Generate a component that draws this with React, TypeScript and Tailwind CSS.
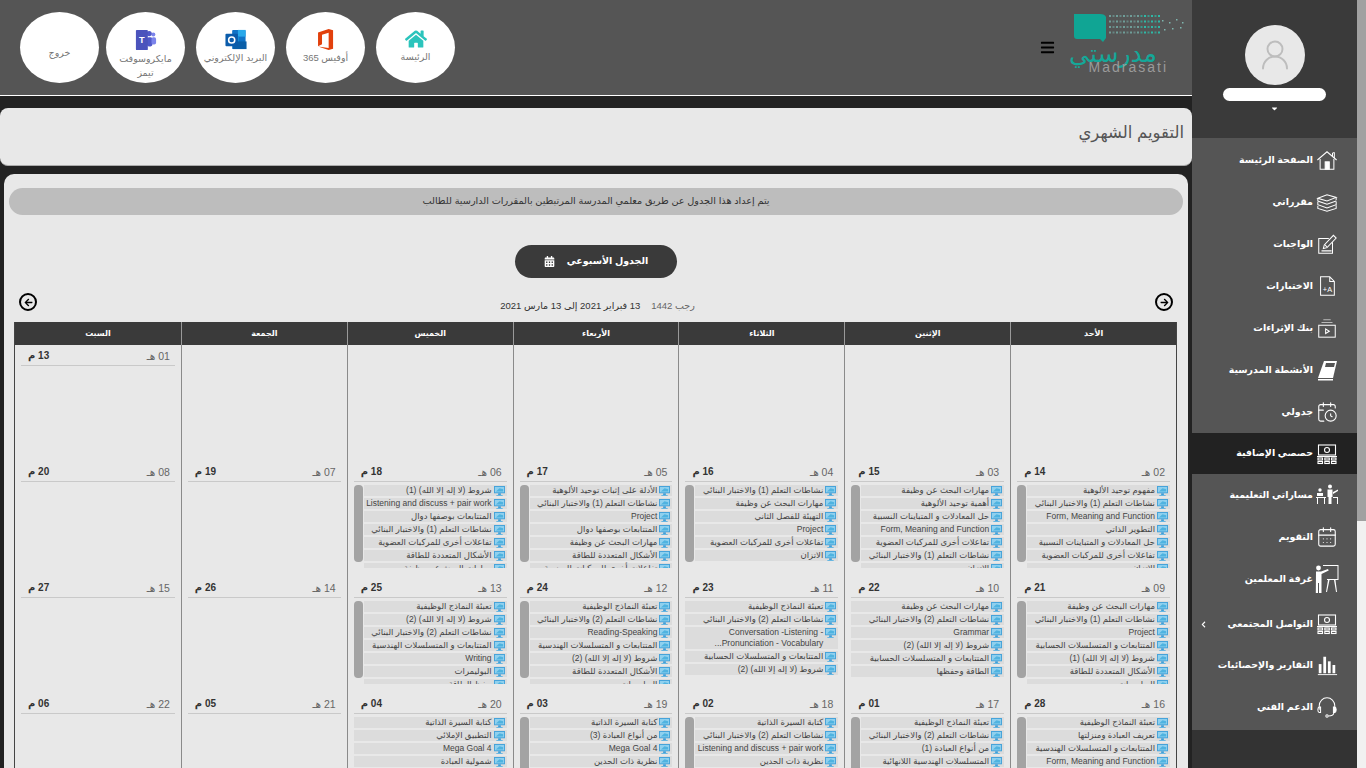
import React from "react";
import { FaHome, FaBars, FaCalendarAlt, FaCaretDown, FaChevronLeft, FaArrowLeft, FaArrowRight } from "react-icons/fa";
import { CalendarClock, CalendarDays, UserRound } from "lucide-react";

const L = {
  s1: "نشاطات التعلم (1) والاختبار البنائي",
  s2: "نشاطات التعلم (2) والاختبار البنائي",
  job: "مهارات البحث عن وظيفة",
  form: "Form, Meaning and Function",
  ineq: "حل المعادلات و المتباينات النسبية",
  org: "تفاعلات أخرى للمركبات العضوية",
  eq: "الاتزان",
  fn: "المتتابعات بوصفها دوال",
  en: "الأشكال المتعددة للطاقة",
  sh1: "شروط (لا إله إلا الله) (1)",
  sh2: "شروط (لا إله إلا الله) (2)",
  ld: "Listening and discuss + pair work",
  ar: "المتتابعات و المتسلسلات الحسابية",
  geo: "المتتابعات و المتسلسلات الهندسية",
  poly: "البوليمرات",
  fill: "تعبئة النماذج الوظيفية",
  cv: "كتابة السيرة الذاتية",
  bin: "نظرية ذات الحدين",
  mg: "Mega Goal 4",
};

type Cell = { h?: string; m?: string; items?: string[]; bar?: boolean };

const rows: Cell[][] = [
  [{}, {}, {}, {}, {}, {}, { h: "01", m: "13" }],
  [
    { h: "02", m: "14", bar: true, items: ["مفهوم توحيد الألوهية", L.s1, L.form, "التطوير الذاتي", L.ineq, L.org, L.eq] },
    { h: "03", m: "15", bar: true, items: [L.job, "أهمية توحيد الألوهية", L.ineq, L.form, L.org, L.s1, L.eq] },
    { h: "04", m: "16", bar: true, items: [L.s1, L.job, "التهيئة للفصل الثاني", "Project", L.org, L.eq] },
    { h: "05", m: "17", bar: true, items: ["الأدلة على إثبات توحيد الألوهية", L.s1, "Project", L.fn, L.job, L.en, L.org] },
    { h: "06", m: "18", bar: true, items: [L.sh1, L.ld, L.fn, L.s1, L.org, L.en, L.job] },
    { h: "07", m: "19" },
    { h: "08", m: "20" },
  ],
  [
    { h: "09", m: "21", bar: true, items: [L.job, L.s1, "Project", L.ar, L.sh1, L.en, L.poly] },
    { h: "10", m: "22", items: [L.job, L.s2, "Grammar", L.sh2, L.ar, "الطاقة وحفظها"] },
    { h: "11", m: "23", items: [L.fill, L.s2, "Conversation -Listening - Pronunciation - Vocabulary...", L.ar, L.sh2] },
    { h: "12", m: "24", bar: true, items: [L.fill, L.s2, "Reading-Speaking", L.geo, L.sh2, L.en, L.poly] },
    { h: "13", m: "25", bar: true, items: [L.fill, L.sh2, L.s2, L.geo, "Writing", L.poly, "حفظ الطاقة"] },
    { h: "14", m: "26" },
    { h: "15", m: "27" },
  ],
  [
    { h: "16", m: "28", bar: true, items: [L.fill, "تعريف العبادة ومنزلتها", L.geo, L.form] },
    { h: "17", m: "01", bar: true, items: [L.fill, L.s2, "من أنواع العبادة (1)", "المتسلسلات الهندسية اللانهائية"] },
    { h: "18", m: "02", bar: true, items: [L.cv, L.s2, L.ld, L.bin] },
    { h: "19", m: "03", bar: true, items: [L.cv, "من أنواع العبادة (3)", L.mg, L.bin] },
    { h: "20", m: "04", items: [L.cv, "التطبيق الإملائي", L.mg, "شمولية العبادة"] },
    { h: "21", m: "05" },
    { h: "22", m: "06" },
  ],
];

const days = ["الأحد", "الإثنين", "الثلاثاء", "الأربعاء", "الخميس", "الجمعة", "السبت"];

function Monitor() {
  return (
    <svg viewBox="0 0 12 11" className="w-[11px] h-[10px] shrink-0">
      <rect x="0" y="0" width="12" height="8" fill="#3f9fd8" />
      <rect x="1" y="1" width="10" height="6" fill="#8fd0ee" />
      <path d="M2 6 L6 2.5 L10 3.5 L10 6 Z" fill="#4fb3e0" />
      <rect x="4.5" y="8" width="3" height="2" fill="#3f9fd8" />
      <rect x="2.5" y="10" width="7" height="1" fill="#5db3e2" />
    </svg>
  );
}

function DayCell({ cell, last }: { cell: Cell; last: boolean }) {
  return (
    <div className={`h-[116px] pt-[5px] px-[6px] flex flex-col ${last ? "" : "border-l border-[#8a8a8a]"}`}>
      {cell.h && (
        <>
          <div className="h-[16px] pr-[5px] pl-[7px] flex items-start justify-between text-[10.5px] leading-[12px] border-b border-[#c9c9c9]">
            <span className="text-[#666]">{cell.h} هـ</span>
            <span className="font-bold text-[#333] text-[10px]">{cell.m} م</span>
          </div>
          <div className="h-[83px] mt-[3px] overflow-hidden flex flex-row gap-[1px]">
            {cell.items && (
              <>
                <div className="grow flex flex-col gap-[2px] min-w-0">
                  {cell.items.map((t, i) => (
                    <div key={i} className="flex items-start gap-[2px] bg-[#dcdcdc] min-h-[11px] px-[2px] text-[8.5px] leading-[11px] text-[#444]">
                      <span className="pt-[1px]"><Monitor /></span>
                      <span className="grow min-w-0">{t}</span>
                    </div>
                  ))}
                </div>
                {cell.bar && <div className="w-[9px] h-[77px] rounded-[4px] bg-[#a3a3a3] shrink-0" />}
              </>
            )}
          </div>
        </>
      )}
    </div>
  );
}

function TopBtn({ icon, label, cls = "" }: { icon?: React.ReactNode; label: React.ReactNode; cls?: string }) {
  return (
    <div className={`w-[79px] h-[71px] rounded-[50%] bg-white flex flex-col items-center text-[9.5px] leading-[14px] text-[#777] text-center shrink-0 ${icon ? "justify-start pt-[16px]" : "justify-center pt-[10px]"} ${cls}`}>
      {icon}
      <div>{label}</div>
    </div>
  );
}

const OutlookIcon = () => (
  <svg viewBox="0 0 24 24" className="w-[24px] h-[23px]">
    <rect x="8" y="2" width="14" height="20" rx="1" fill="#0f72c6" />
    <rect x="14" y="2" width="8" height="7" fill="#28a8ea" />
    <rect x="8" y="9" width="7" height="6" fill="#0f8fd8" />
    <path d="M9 14 L23 14 L23 22 L9 22 Z" fill="#0a5fa8" />
    <rect x="1" y="6" width="13" height="13" rx="1" fill="#0b5cab" />
    <circle cx="7.5" cy="12.5" r="3.2" fill="none" stroke="#fff" strokeWidth="1.6" />
  </svg>
);
const OfficeIcon = () => (
  <svg viewBox="0 0 20 26" className="w-[18px] h-[23px]">
    <path d="M1 5 L13 1 L18 2.5 L18 23.5 L13 25 L1 21 L13 22.5 L13 5.5 L5.5 7.5 L5.5 18.5 L1 20.5 Z" fill="#e2400c" />
  </svg>
);
const TeamsIcon = () => (
  <svg viewBox="0 0 24 24" className="w-[22px] h-[24px]">
    <circle cx="20" cy="6" r="2.2" fill="#7b83eb" />
    <circle cx="15.5" cy="5" r="2.8" fill="#5059c9" />
    <rect x="13" y="9" width="6" height="10" rx="2" fill="#5059c9" />
    <rect x="18" y="9" width="5" height="8" rx="2" fill="#7b83eb" />
    <rect x="1" y="1" width="13" height="22" rx="1" fill="#4b53bc" />
    <text x="7.5" y="15.5" fontSize="10" fontWeight="700" fill="#fff" textAnchor="middle" fontFamily="Liberation Sans">T</text>
  </svg>
);

function CircleArrow({ dir }: { dir: "l" | "r" }) {
  return (
    <div className="w-[18px] h-[18px] rounded-full border-[2.5px] border-black flex items-center justify-center text-black">
      {dir === "l" ? <FaArrowLeft size={9} /> : <FaArrowRight size={9} />}
    </div>
  );
}

const ic = { size: 22, strokeWidth: 1.2, color: "#fff" };
const stroke = { fill: "none", stroke: "#fff", strokeWidth: 1.1 };
const BoardIcon = () => (
  <svg viewBox="0 0 24 24" width="24" height="24" {...stroke}>
    <rect x="3.5" y="3" width="17" height="10" />
    <circle cx="12" cy="8" r="2.5" />
    <path d="M2 14.5 H22" />
    <rect x="3" y="16" width="4.5" height="2" /><rect x="9.8" y="16" width="4.5" height="2" /><rect x="16.5" y="16" width="4.5" height="2" />
    <rect x="3" y="19.5" width="4.5" height="2" /><rect x="9.8" y="19.5" width="4.5" height="2" /><rect x="16.5" y="19.5" width="4.5" height="2" />
  </svg>
);
const side: { t: string; i: React.ReactNode; active?: boolean; chev?: boolean; h: number; wide?: boolean }[] = [
  {
    t: "الصفحة الرئيسة",
    i: (
      <svg viewBox="0 0 24 24" width="22" height="22" {...stroke}>
        <path d="M1.5 12 L12 3 L22.5 12" />
        <path d="M18 4 V8 M18.5 4 H20 V10" />
        <path d="M4.5 11 V22 H19.5 V11" />
        <rect x="10" y="14" width="4.5" height="8" fill="#fff" />
      </svg>
    ),
    h: 42,
  },
  {
    t: "مقرراتي",
    i: (
      <svg viewBox="0 0 24 24" width="24" height="22" {...stroke}>
        <path d="M2 8 L12 4 L22 7 L12 11 Z" />
        <path d="M2 8 V11 L12 14.5 L22 11" />
        <path d="M22 10 V7" />
        <path d="M2 12 V15 L12 18.5 L22 15 V11.5" />
        <path d="M2 16 V19 L12 22 L22 19 V15.5" />
      </svg>
    ),
    h: 42,
  },
  {
    t: "الواجبات",
    i: (
      <svg viewBox="0 0 24 24" width="22" height="22" {...stroke}>
        <path d="M18 10 V22 H3 V6 H14" />
        <path d="M8 17 L9 13 L19 2.5 L22 5.5 L12 16 Z" />
        <path d="M10 13 L12 15.5 M6 19.5 H17" />
      </svg>
    ),
    h: 42,
  },
  {
    t: "الاختبارات",
    i: (
      <svg viewBox="0 0 24 24" width="22" height="22" {...stroke}>
        <path d="M5 2 H15 L20 7 V22 H5 Z M15 2 V7 H20" />
        <text x="12.5" y="18" fontSize="8" fill="#fff" stroke="none" textAnchor="middle" fontFamily="Liberation Sans">A+</text>
      </svg>
    ),
    h: 42,
  },
  {
    t: "بنك الإثراءات",
    i: (
      <svg viewBox="0 0 24 24" width="22" height="22" {...stroke}>
        <rect x="3" y="9" width="18" height="13" />
        <path d="M6 6 H18 M8 3 H16" stroke="#bbb" />
        <path d="M10.5 13 L14.5 15.5 L10.5 18 Z" />
      </svg>
    ),
    h: 42,
  },
  {
    t: "الأنشطة المدرسية",
    i: (
      <svg viewBox="0 0 24 24" width="24" height="24" fill="#fff">
        <path d="M9 3 H22 L18 20 H3 Z" />
        <path d="M11 5 H20 L19 9 H10 Z" fill="#555" />
        <path d="M3 21 H18 V22.5 H3 Z" />
      </svg>
    ),
    h: 42,
  },
  { t: "جدولي", i: <CalendarClock {...ic} />, h: 42 },
  { t: "حصصي الإضافية", i: <BoardIcon />, active: true, h: 41 },
  {
    t: "مساراتي التعليمية",
    i: (
      <svg viewBox="0 0 24 24" width="24" height="24" fill="#fff">
        <circle cx="15" cy="3.5" r="2" />
        <path d="M12.5 6.5 H17.5 V14 H16.5 V21 H13.5 V14 H12.5 Z" />
        <path d="M18 9 L23 6.5 V8 L18 11 Z M18 14 H23 V21 H22 V15 H18 Z" />
        <circle cx="5" cy="7" r="1.7" />
        <path d="M2 10 H8 V13 H2 Z M1 14 H11 V15 H1 Z M2 15 V21 H3 V15 Z M9 15 V21 H10 V15 Z" />
      </svg>
    ),
    h: 42,
  },
  { t: "التقويم", i: <CalendarDays {...ic} />, h: 42 },
  {
    t: "غرفة المعلمين",
    wide: true,
    i: (
      <svg viewBox="0 0 24 30" width="24" height="30" fill="#fff">
        <circle cx="3.5" cy="4" r="2.4" />
        <path d="M1 7.5 H6 L13 5 L13.7 6.4 L6.5 10 V29 H4 V19 H3 V29 H0.8 Z" />
        <path d="M8 1 H23.5 V16 H12 V15 H22.5 V2 H8 Z" />
        <path d="M13 16 H14.5 L12 28 H11 Z M19 16 H20.5 L22 28 H21 Z" />
      </svg>
    ),
    h: 46,
  },
  { t: "التواصل المجتمعي", i: <BoardIcon />, chev: true, h: 40 },
  {
    t: "التقارير والإحصائيات",
    i: (
      <svg viewBox="0 0 24 24" width="22" height="22" fill="#fff">
        <rect x="3" y="11" width="3" height="10" />
        <rect x="8" y="3" width="3" height="18" />
        <rect x="13" y="8" width="3" height="13" />
        <rect x="18" y="12" width="3" height="9" />
        <rect x="2" y="22" width="21" height="1" />
      </svg>
    ),
    h: 42,
  },
  {
    t: "الدعم الفني",
    i: (
      <svg viewBox="0 0 24 24" width="22" height="22" {...stroke}>
        <path d="M3.5 15 V11 C3.5 5.5 7.5 2 12 2 C16.5 2 20.5 5.5 20.5 11 V15" />
        <path d="M3.5 12 C1.5 12.5 1.5 17.5 3.5 18 H5 V12 Z" />
        <path d="M20.5 12 C22.5 12.5 22.5 17.5 20.5 18 H19 V12 Z" fill="#fff" />
        <path d="M19.5 18 C19.5 21 16 21.8 13.5 21.8" />
        <circle cx="12" cy="21.8" r="1.3" />
      </svg>
    ),
    h: 42,
  },
];

export default function App() {
  return (
    <div dir="rtl" className="h-screen w-full overflow-hidden flex flex-row bg-[#222] font-['Liberation_Sans','DejaVu_Sans',sans-serif]">
      {/* page scrollbar */}
      <div className="w-[9px] h-full bg-[#f1f1f1] shrink-0 order-first">
        <div className="h-[521px] bg-[#a1a1a1]" />
      </div>

      {/* sidebar */}
      <aside className="w-[165px] h-full shrink-0 flex flex-col bg-[#333]">
        <div className="h-[138px] bg-[#3a3a3a] flex flex-col items-center pt-[25px] shrink-0">
          <div className="w-[60px] h-[60px] rounded-full bg-[#e8e8e8] flex items-center justify-center">
            <UserRound size={36} strokeWidth={1.3} color="#bdbdbd" />
          </div>
          <div className="w-[103px] h-[13px] rounded-full bg-white mt-[3px]" />
          <FaCaretDown size={9} color="#fff" className="mt-[3px]" />
        </div>
        <nav className="bg-[#555] flex flex-col pt-[1px] pb-[2px]">
          {side.map((s) => (
            <div key={s.t} style={{ height: s.h }} className={`flex items-center pr-[18px] ${s.wide ? "pb-[4px]" : ""} ${s.active ? "bg-[#222]" : ""}`}>
              <div className={`${s.wide ? "w-[26px] -mr-[1px]" : "w-[25px]"} flex justify-center shrink-0`}>{s.i}</div>
              <span className={`${s.wide ? "mr-[1px]" : "mr-[1px]"} text-[9.5px] font-bold text-white whitespace-nowrap`}>{s.t}</span>
              {s.chev && <FaChevronLeft size={7} color="#fff" className="mr-auto ml-[8px]" />}
            </div>
          ))}
        </nav>
      </aside>

      {/* main */}
      <main className="grow min-w-0 flex flex-col">
        <header className="h-[96px] shrink-0 bg-[#555] border-b border-white flex items-center justify-between pr-[8px] pl-[20px]">
          <div className="flex items-center gap-[17px]">
            <div className="w-[112px] flex flex-col items-start pb-[8px]">
              <svg viewBox="0 0 112 28" className="w-[112px] h-[28px]">
                <path d="M2 0 H28 Q33 0 34 3 V24 L31 28 L28 25 H5 Q2 25 2 22 Z" fill="#10a594" />
                {[0, 1, 2, 3].map((r) =>
                  Array.from({ length: 15 }).map((_, c) => (
                    <rect key={`${r}-${c}`} x={37 + c * 3.5} y={1 + r * 5.5} width="2" height="2" fill={c < 9 ? "#6f9d98" : "#2fb8a6"} opacity={c % 2 ? 0.7 : 1} />
                  ))
                )}
                {[[90, 6], [97, 8], [104, 5], [110, 8], [92, 15], [100, 14], [108, 13]].map(([x, y]) => (
                  <rect key={`${x}-${y}`} x={x} y={y} width="1.5" height="1.5" fill="#7fb5ae" />
                ))}
              </svg>
              <div className="text-[25px] leading-[22px] text-[#14a899] mr-[27px] whitespace-nowrap">مدرستي</div>
              <div dir="ltr" className="text-[14px] leading-[12px] tracking-[2px] text-[#9a9a9a] mr-[16px] -mt-[3px]">Madrasati</div>
            </div>
            <FaBars size={15} color="#000" />
          </div>
          <div className="flex items-center gap-[11px] h-[71px]">
            <TopBtn icon={<FaHome size={22} color="#2bc4bc" />} label="الرئيسة" />
            <TopBtn icon={<OfficeIcon />} label="أوفيس 365" />
            <TopBtn icon={<OutlookIcon />} label="البريد الإلكتروني" />
            <TopBtn icon={<TeamsIcon />} label={<>مايكروسوفت<br />تيمز</>} cls="-ml-[4px]" />
            <TopBtn label="خروج" />
          </div>
        </header>

        <section className="mt-[12px] h-[58px] shrink-0 bg-[#e8e8e8] rounded-[8px] border-b border-[#aaa] flex items-center pr-[8px] pb-[8px]">
          <h1 className="text-[16.5px] font-normal text-[#555]">التقويم الشهري</h1>
        </section>

        <section className="mt-[8px] mr-[4px] ml-[4px] grow min-h-0 bg-[#e8e8e8] rounded-t-[10px] px-[5px] pt-[14px] overflow-hidden">
          <div className="h-[27px] rounded-full bg-[#bdbdbd] flex items-center justify-center text-[9.7px] text-[#333]">
            يتم إعداد هذا الجدول عن طريق معلمي المدرسة المرتبطين بالمقررات الدارسية للطالب
          </div>
          <div className="flex justify-center mt-[30px]">
            <div className="w-[162px] h-[33px] rounded-full bg-[#3a3a3a] flex items-center justify-center gap-[12px] text-white text-[9.5px] font-bold">
              <span>الجدول الأسبوعي</span>
              <FaCalendarAlt size={11} color="#fff" />
            </div>
          </div>
          <div className="h-[22px] mt-[13px] mr-[10px] ml-[10px] flex items-center justify-between">
            <CircleArrow dir="r" />
            <div className="flex items-center gap-[11px] text-[9.5px] text-[#333] mt-[8px] ml-[3px]">
              <span className="text-[#666]">رجب 1442</span>
              <span>13 فبراير 2021 إلى 13 مارس 2021</span>
            </div>
            <CircleArrow dir="l" />
          </div>

          <div className="mr-[6px] mt-[9px] w-[1163px] border-r border-l border-[#444]">
            <div className="grid grid-cols-7 h-[23px] bg-[#3a3a3a] text-white text-[8px] font-bold">
              {days.map((d, i) => (
                <div key={d} className={`flex items-center justify-center ${i < 6 ? "border-l border-[#999]" : ""}`}>{d}</div>
              ))}
            </div>
            {rows.map((row, r) => (
              <div key={r} className="grid grid-cols-7">
                {row.map((c, i) => <DayCell key={i} cell={c} last={i === 6} />)}
              </div>
            ))}
          </div>
        </section>
      </main>
    </div>
  );
}
